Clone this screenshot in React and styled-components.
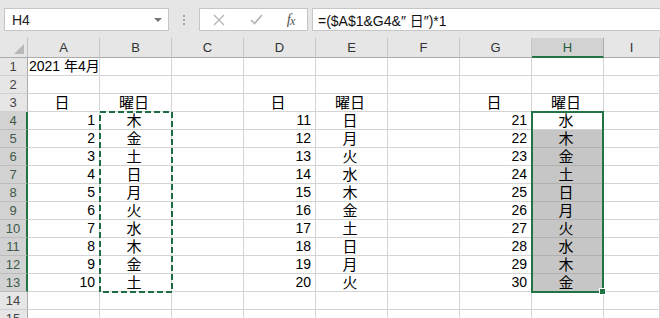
import React from 'react'
import styled, { createGlobalStyle } from 'styled-components'

const GREEN = '#217346'
const GRID = '#d4d4d4'
const COLS = ['A', 'B', 'C', 'D', 'E', 'F', 'G', 'H', 'I']
const TRACK = '28px repeat(8, 72px) 56px'

const days1 = ['木', '金', '土', '日', '月', '火', '水', '木', '金', '土']
const days2 = ['日', '月', '火', '水', '木', '金', '土', '日', '月', '火']
const days3 = ['水', '木', '金', '土', '日', '月', '火', '水', '木', '金']

// each row: 9 cells (A..I) -> { t, align, shade }
const buildRows = () => {
  const rows = []
  for (let r = 1; r <= 15; r++) {
    const cells = COLS.map(() => ({ t: '', align: 'left' }))
    if (r === 1) cells[0] = { t: '2021 年4月', align: 'left' }
    if (r === 3) {
      ;[0, 3, 6].forEach((c) => {
        cells[c] = { t: '日', align: 'center' }
        cells[c + 1] = { t: '曜日', align: 'center' }
      })
    }
    if (r >= 4 && r <= 13) {
      const i = r - 4
      cells[0] = { t: String(i + 1), align: 'right' }
      cells[1] = { t: days1[i], align: 'center' }
      cells[3] = { t: String(11 + i), align: 'right' }
      cells[4] = { t: days2[i], align: 'center' }
      cells[6] = { t: String(21 + i), align: 'right' }
      cells[7] = { t: days3[i], align: 'center', shade: r > 4 }
    }
    rows.push(cells)
  }
  return rows
}

const GlobalStyle = createGlobalStyle`
  html, body { margin: 0; padding: 0; background: #fff; }
  body {
    font-family: "Liberation Sans", "Noto Sans CJK JP", sans-serif;
    color: #000;
  }
`

const Page = styled.div`
  width: 660px;
  height: 318px;
  overflow: hidden;
  background: #fff;
`

const FormulaBar = styled.div`
  height: 38px;
  background: #e6e6e6;
  display: flex;
  align-items: flex-start;
  padding: 8px 0 0 4px;
  box-sizing: border-box;
`

const NameBox = styled.div`
  width: 165px;
  height: 23px;
  box-sizing: border-box;
  background: #fff;
  border: 1px solid #c6c6c6;
  display: flex;
  align-items: center;
  justify-content: space-between;
  padding: 0 6px 0 7px;
  font-size: 14px;
  color: #222;
`

const Caret = styled.span`
  width: 0;
  height: 0;
  border-left: 4px solid transparent;
  border-right: 4px solid transparent;
  border-top: 4px solid #777;
`

const Grip = styled.div`
  width: 30px;
  height: 23px;
  display: flex;
  flex-direction: column;
  align-items: center;
  justify-content: center;
  gap: 2px;
  span {
    width: 2px;
    height: 2px;
    background: #a6a6a6;
  }
`

const FxBox = styled.div`
  width: 109px;
  height: 23px;
  box-sizing: border-box;
  background: #fff;
  border: 1px solid #c6c6c6;
  display: grid;
  grid-template-columns: 38px 36px 1fr;
  align-items: center;
  justify-items: center;
  color: #b4b4b4;
`

const Fx = styled.span`
  font-family: "Liberation Serif", serif;
  font-style: italic;
  font-size: 15px;
  color: #555;
  letter-spacing: -1px;
  sub { font-size: 12px; vertical-align: -1px; }
`

const FormulaInput = styled.div`
  flex: 1;
  margin-left: 4px;
  height: 23px;
  box-sizing: border-box;
  background: #fff;
  border: 1px solid #c6c6c6;
  border-right: none;
  display: flex;
  align-items: center;
  padding-left: 5px;
  font-size: 14px;
  color: #111;
  white-space: nowrap;
`

const Sheet = styled.div`
  position: relative;
`

const Row = styled.div`
  display: grid;
  grid-template-columns: ${TRACK};
  height: ${(p) => (p.$head ? '20px' : '18px')};
`

const Corner = styled.div`
  background: #e6e6e6;
  border-right: 1px solid #c0c0c0;
  border-bottom: 1px solid #ababab;
  box-sizing: border-box;
  display: flex;
  align-items: flex-end;
  justify-content: flex-end;
  padding: 0 3px 3px 0;
`

const ColHead = styled.div`
  box-sizing: border-box;
  background: ${(p) => (p.$active ? '#d2d2d2' : '#e6e6e6')};
  border-right: 1px solid ${(p) => (p.$active ? '#ababab' : '#c6c6c6')};
  border-bottom: ${(p) => (p.$active ? `2px solid ${GREEN}` : '1px solid #ababab')};
  display: flex;
  align-items: center;
  justify-content: center;
  font-size: 13px;
  color: ${(p) => (p.$active ? '#1e5e3a' : '#333')};
  padding-top: ${(p) => (p.$active ? '1px' : '0')};
`

const RowHead = styled.div`
  box-sizing: border-box;
  background: ${(p) => (p.$active ? '#d2d2d2' : '#e6e6e6')};
  border-right: ${(p) => (p.$active ? `2px solid ${GREEN}` : '1px solid #ababab')};
  border-bottom: 1px solid ${(p) => (p.$active ? '#bcbcbc' : '#d0d0d0')};
  display: flex;
  align-items: center;
  justify-content: center;
  font-size: 13px;
  color: ${(p) => (p.$active ? '#3f5a48' : '#444')};
  padding-right: ${(p) => (p.$active ? '0' : '1px')};
`

const Cell = styled.div`
  box-sizing: border-box;
  background: ${(p) => (p.$shade ? '#c6c6c6' : '#fff')};
  border-right: 1px solid ${GRID};
  border-bottom: 1px solid ${(p) => (p.$shade ? '#b0b0b0' : GRID)};
  display: flex;
  align-items: flex-end;
  justify-content: ${(p) =>
    p.$align === 'right' ? 'flex-end' : p.$align === 'center' ? 'center' : 'flex-start'};
  padding: 0 4px 0 1px;
  font-size: ${(p) => (p.$align === 'center' ? '15px' : '14px')};
  line-height: 17px;
  white-space: nowrap;
  overflow: visible;
`

const Marquee = styled.svg`
  position: absolute;
  left: 99px;
  top: 73px;
  width: 74px;
  height: 182px;
  pointer-events: none;
`

const Selection = styled.div`
  position: absolute;
  left: 531px;
  top: 73px;
  width: 73px;
  height: 182px;
  box-sizing: border-box;
  border: 2px solid ${GREEN};
  pointer-events: none;
`

const FillHandle = styled.span`
  position: absolute;
  right: -4px;
  bottom: -4px;
  width: 5px;
  height: 5px;
  background: ${GREEN};
  border: 1px solid #fff;
`

const XIcon = () => (
  <svg width="12" height="12" viewBox="0 0 12 12">
    <path d="M1 1 L11 11 M11 1 L1 11" stroke="#b4b4b4" strokeWidth="1.3" fill="none" />
  </svg>
)

const CheckIcon = () => (
  <svg width="13" height="11" viewBox="0 0 13 11">
    <path d="M1 6 L4.5 9.5 L12 1" stroke="#b4b4b4" strokeWidth="1.6" fill="none" />
  </svg>
)

const App = () => {
  const rows = buildRows()
  return (
    <Page>
      <GlobalStyle />
      <FormulaBar>
        <NameBox>
          H4
          <Caret />
        </NameBox>
        <Grip>
          <span />
          <span />
          <span />
        </Grip>
        <FxBox>
          <XIcon />
          <CheckIcon />
          <Fx>
            f<sub>x</sub>
          </Fx>
        </FxBox>
        <FormulaInput>=($A$1&amp;G4&amp;″ 日″)*1</FormulaInput>
      </FormulaBar>

      <Sheet>
        <Row $head>
          <Corner>
            <svg width="10" height="10" viewBox="0 0 10 10">
              <path d="M10 0 L10 10 L0 10 Z" fill="#b8b8b8" />
            </svg>
          </Corner>
          {COLS.map((c) => (
            <ColHead key={c} $active={c === 'H'}>
              {c}
            </ColHead>
          ))}
        </Row>
        {rows.map((cells, i) => {
          const r = i + 1
          return (
            <Row key={r}>
              <RowHead $active={r >= 4 && r <= 13}>{r}</RowHead>
              {cells.map((c, j) => (
                <Cell key={j} $align={c.align} $shade={c.shade}>
                  {c.t}
                </Cell>
              ))}
            </Row>
          )
        })}

        <Marquee viewBox="0 0 74 182">
          <rect
            x="1"
            y="1"
            width="72"
            height="180"
            fill="none"
            stroke="#1f6b43"
            strokeWidth="2"
            strokeDasharray="6 3"
          />
        </Marquee>
        <Selection>
          <FillHandle />
        </Selection>
      </Sheet>
    </Page>
  )
}

export default App
